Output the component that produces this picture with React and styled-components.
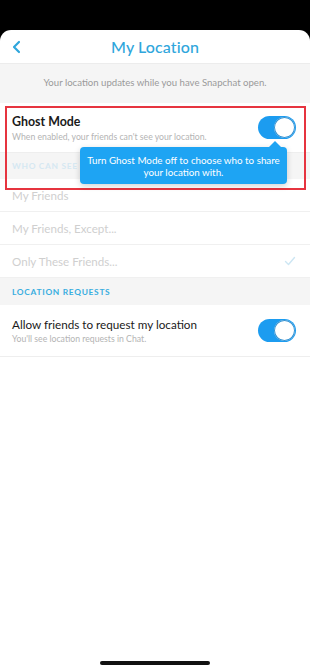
import React from "react";
import styled, { createGlobalStyle } from "styled-components";

const Global = createGlobalStyle`
  html, body { margin: 0; padding: 0; background: #000; }
  * { box-sizing: border-box; }
  body { font-family: Lato, "Open Sans", "Noto Sans", sans-serif; }
`;

const Screen = styled.div`
  width: 310px;
  height: 671px;
  background: #000;
  padding-top: 30px;
  display: flex;
  flex-direction: column;
`;

const Sheet = styled.div`
  flex: 1;
  background: #fff;
  border-radius: 11px 11px 0 0;
  display: flex;
  flex-direction: column;
  overflow: hidden;
`;

const Header = styled.div`
  height: 34px;
  display: flex;
  align-items: center;
  justify-content: center;
  position: relative;
  border-bottom: 1px solid #ececec;
`;

const Back = styled.div`
  position: absolute;
  left: 10px;
  top: 10px;
  width: 14px;
  height: 14px;
  display: flex;
`;

const Title = styled.div`
  font-size: 16px;
  font-weight: 500;
  color: #2fa6dc;
  letter-spacing: 0.1px;
`;

const InfoBand = styled.div`
  height: 39px;
  background: #f5f5f5;
  display: flex;
  align-items: center;
  justify-content: center;
  font-size: 9.6px;
  color: #9a9a9a;
  padding-bottom: 2px;
`;

const Highlight = styled.div`
  position: relative;
`;

const ToggleRow = styled.div`
  height: ${(p) => p.$h}px;
  background: #fff;
  display: flex;
  align-items: center;
  justify-content: space-between;
  padding: 0 14px 0 12px;
  border-bottom: 1px solid #eeeeee;
`;

const RowText = styled.div`
  display: flex;
  flex-direction: column;
  gap: 2px;
`;

const RowTitle = styled.div`
  font-size: ${(p) => (p.$bold ? 12.4 : 11.7)}px;
  font-weight: ${(p) => (p.$bold ? 700 : 400)};
  color: #1a1a1a;
`;

const RowSub = styled.div`
  font-size: 8.7px;
  color: #b4b4b4;
`;

const Toggle = styled.div`
  width: 38px;
  height: 23px;
  border-radius: 12px;
  background: #1c9cf0;
  position: relative;
  flex-shrink: 0;
  &::after {
    content: "";
    position: absolute;
    right: 1px;
    top: 1px;
    width: 21px;
    height: 21px;
    border-radius: 50%;
    background: #fff;
    box-shadow: 0 0 0 1px #2f8fd0 inset;
  }
`;

const Band = styled.div`
  height: ${(p) => p.$h}px;
  background: #f5f5f5;
  display: flex;
  align-items: center;
  padding-left: 12px;
  font-size: 8.4px;
  font-weight: 700;
  letter-spacing: 0.7px;
  color: ${(p) => (p.$faded ? "#d6e8f2" : "#3aaee0")};
`;

const OptionRow = styled.div`
  height: 33px;
  display: flex;
  align-items: center;
  justify-content: space-between;
  padding: 0 14px 0 12px;
  font-size: 11.6px;
  color: #cfcfcf;
  border-bottom: 1px solid #f0f0f0;
`;

const Frame = styled.div`
  position: absolute;
  left: 5px;
  top: 3px;
  width: 301px;
  height: 84px;
  border: 2px solid #e6343f;
  pointer-events: none;
`;

const Tip = styled.div`
  position: absolute;
  left: 80px;
  top: 44px;
  width: 207px;
  height: 37px;
  background: #1ea4f3;
  border-radius: 4px;
  color: #fff;
  font-size: 9.8px;
  line-height: 12px;
  text-align: center;
  display: flex;
  align-items: center;
  justify-content: center;
  box-shadow: 0 2px 6px rgba(0, 0, 0, 0.18);
  &::before {
    content: "";
    position: absolute;
    left: 189px;
    top: -6px;
    border-left: 6px solid transparent;
    border-right: 6px solid transparent;
    border-bottom: 6px solid #1ea4f3;
  }
`;

const Spacer = styled.div`
  flex: 1;
`;

const HomeBar = styled.div`
  width: 110px;
  height: 4px;
  border-radius: 2px;
  background: #111;
  align-self: center;
  margin-bottom: 6px;
`;

export default function App() {
  return (
    <>
      <Global />
      <Screen>
        <Sheet>
          <Header>
            <Back>
              <svg width="14" height="14" viewBox="0 0 14 14">
                <path d="M9 2 L4 7 L9 12" fill="none" stroke="#2fa6dc" strokeWidth="2.2" strokeLinecap="round" strokeLinejoin="round" />
              </svg>
            </Back>
            <Title>My Location</Title>
          </Header>
          <InfoBand>Your location updates while you have Snapchat open.</InfoBand>
          <Highlight>
            <ToggleRow $h={50}>
              <RowText>
                <RowTitle $bold>Ghost Mode</RowTitle>
                <RowSub>When enabled, your friends can't see your location.</RowSub>
              </RowText>
              <Toggle />
            </ToggleRow>
            <Band $h={26} $faded>WHO CAN SEE MY LOCATION</Band>
            <Frame />
            <Tip>
              Turn Ghost Mode off to choose who to share
              <br />
              your location with.
            </Tip>
          </Highlight>
          <OptionRow>My Friends</OptionRow>
          <OptionRow>My Friends, Except...</OptionRow>
          <OptionRow>
            Only These Friends...
            <svg width="12" height="10" viewBox="0 0 12 10">
              <path d="M1.5 5.5 L4.5 8.5 L10.5 1.5" fill="none" stroke="#cde6f3" strokeWidth="1.4" strokeLinecap="round" strokeLinejoin="round" />
            </svg>
          </OptionRow>
          <Band $h={27}>LOCATION REQUESTS</Band>
          <ToggleRow $h={52}>
            <RowText>
              <RowTitle>Allow friends to request my location</RowTitle>
              <RowSub>You'll see location requests in Chat.</RowSub>
            </RowText>
            <Toggle />
          </ToggleRow>
          <Spacer />
          <HomeBar />
        </Sheet>
      </Screen>
    </>
  );
}
